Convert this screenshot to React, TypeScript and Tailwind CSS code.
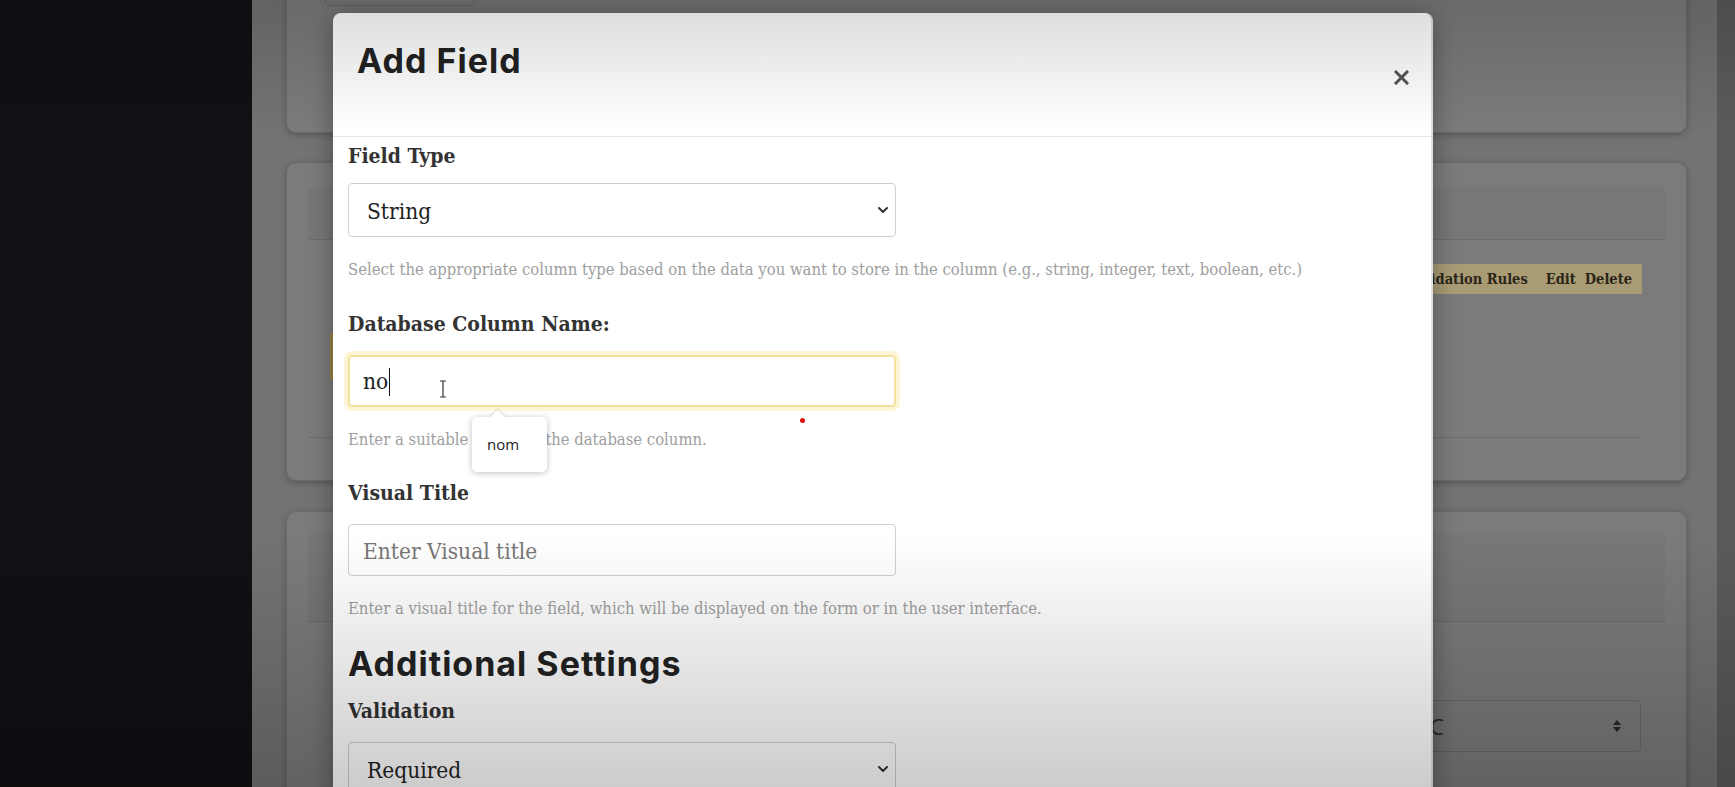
import { ChevronDown } from "lucide-react";

const slab = "font-['DejaVu_Serif_Condensed','DejaVu_Serif',serif] font-stretch-condensed";
const heading = "font-['Inter','Liberation_Sans',sans-serif] text-[34px] font-bold leading-[40px] tracking-[1px] text-[#222]";
const label = "font-['DejaVu_Serif_Condensed','DejaVu_Serif',serif] font-stretch-condensed text-[21px] font-bold leading-[34px] text-[#333]";
const help = "font-['DejaVu_Serif_Condensed','DejaVu_Serif',serif] font-stretch-condensed text-[16.5px] leading-[24px] text-[#9e9e9e]";

const UpDown = () => (
  <svg width="10" height="16" viewBox="0 0 10 16" fill="#262626">
    <path d="M1 7 L5 2 L9 7 Z" />
    <path d="M1 9 L5 14 L9 9 Z" />
  </svg>
);

const IBeam = () => (
  <svg width="8" height="18" viewBox="0 0 8 18" fill="none" stroke="#333" strokeWidth="1.2">
    <path d="M1 1 H7 M4 1 V17 M1 17 H7" />
  </svg>
);

const CloseIcon = () => (
  <svg width="15" height="15" viewBox="0 0 15 15" stroke="#555" strokeWidth="3" strokeLinecap="square">
    <path d="M2 2 L13 13 M13 2 L2 13" />
  </svg>
);

function BackgroundPage() {
  return (
    <div className="-mt-[40px] flex flex-col">
      {/* card 1 */}
      <section className="h-[173px] shrink-0 rounded-[10px] border border-[#6a6a6a] bg-[#7b7b7b] px-[21px] pt-[9px] shadow-[0_2px_6px_rgba(0,0,0,0.25)]">
        <div className="ml-[17px] h-[36px] w-[150px] rounded-[4px] border border-[#696969] bg-[#7a7a7a]" />
      </section>

      {/* card 2 */}
      <section className="mt-[29px] h-[319px] shrink-0 rounded-[10px] border border-[#6a6a6a] bg-[#7b7b7b] px-[21px] pt-[24px] shadow-[0_2px_6px_rgba(0,0,0,0.25)]">
        <div className="h-[53px] rounded-t-[4px] border-b border-[#6c6c6c] bg-[#777777]" />
        <div
          className={`mt-[24px] ml-[60px] mr-[23px] flex h-[30px] items-center justify-end bg-[#a99c75] pr-[10px] ${slab} text-[14.5px] font-bold text-[#2a2419]`}
        >
          <span>Validation Rules</span>
          <span className="ml-[18px]">Edit</span>
          <span className="ml-[9px]">Delete</span>
        </div>
        <div className="ml-[22px] mt-[39px] h-[47px] w-[40px] bg-[#9a8446]" />
        <div className="mr-[24px] mt-[57px] border-t border-[#6c6c6c]" />
      </section>

      {/* card 3 */}
      <section className="mt-[30px] h-[400px] shrink-0 rounded-[10px] border border-[#6a6a6a] bg-[#7b7b7b] px-[21px] pt-[21px] shadow-[0_2px_6px_rgba(0,0,0,0.25)]">
        <div className="h-[89px] rounded-t-[4px] border-b border-[#6c6c6c] bg-[#777777]" />
        <div className="mr-[24px] mt-[78px] flex justify-end">
          <div className="flex h-[52px] w-[251px] items-center justify-between rounded-[4px] border border-[#686868] pl-[13px] pr-[18px]">
            <span className="font-['Open_Sans',sans-serif] text-[22px] text-[#2a2a2a]">ASC</span>
            <UpDown />
          </div>
        </div>
      </section>
    </div>
  );
}

function AddFieldModal() {
  return (
    <div className="absolute left-[333px] top-[13px] flex h-[800px] w-[1100px] flex-col overflow-hidden rounded-t-[8px] border-r-2 border-[#e0e0e0] bg-white shadow-[0_4px_24px_rgba(0,0,0,0.35)]">
      <div className="flex h-[124px] shrink-0 items-start justify-between border-b border-[#e6e6e6] pl-[24px] pr-[22px]">
        <h2 className={`mt-[28px] ${heading}`}>Add Field</h2>
        <button className="mt-[57px]" aria-label="Close">
          <CloseIcon />
        </button>
      </div>

      <div className="flex-1 px-[15px] pt-[2px]">
        <div className={label}>Field Type</div>
        <div className="relative mt-[10px] w-[548px]">
          <select className={`h-[54px] w-full appearance-none rounded-[4px] border border-[#cfcfcf] bg-white pl-[18px] pt-[3px] ${slab} text-[22.5px] text-[#222]`}>
            <option>String</option>
          </select>
          <ChevronDown className="pointer-events-none absolute right-[5px] top-[19px] h-[16px] w-[16px] text-[#333]" strokeWidth={3} />
        </div>
        <p className={`mt-[21px] ${help}`}>
          Select the appropriate column type based on the data you want to store in the column (e.g., string, integer, text, boolean, etc.)
        </p>

        <div className={`mt-[25px] ${label}`}>Database Column Name:</div>
        <div className="relative mt-[14px] w-[548px]">
          <div className="flex h-[52px] items-center rounded-[4px] border-2 border-[#f3e1a0] pl-[13px] pt-[2px] shadow-[0_0_0_4px_rgba(250,225,130,0.35)]">
            <span className={`${slab} text-[22.5px] text-[#222]`}>no</span>
            <span className="ml-px h-[28px] border-l border-[#111]" />
          </div>
          <div className="pointer-events-none absolute left-[91px] top-[25px]">
            <IBeam />
          </div>
          <div className="absolute left-[124px] top-[62px] z-10 h-[55px] w-[75px] rounded-[5px] bg-white shadow-[0_1px_6px_rgba(0,0,0,0.25)]">
            <div className="absolute -top-[5px] left-[20px] h-[11px] w-[11px] rotate-45 bg-white shadow-[-1px_-1px_2px_rgba(0,0,0,0.12)]" />
            <div className="relative flex h-full items-center pl-[15px] font-['Open_Sans',sans-serif] text-[15px] text-[#222]">
              nom
            </div>
          </div>
        </div>
        <p className={`mt-[21px] ${help}`}>Enter a suitable name for the database column.</p>

        <div className={`mt-[24px] ${label}`}>Visual Title</div>
        <input
          className={`mt-[14px] h-[52px] w-[548px] rounded-[4px] border border-[#cfcfcf] pl-[14px] pt-[2px] ${slab} text-[22.5px] text-[#222] placeholder:text-[#777]`}
          placeholder="Enter Visual title"
        />
        <p className={`mt-[21px] ${help}`}>
          Enter a visual title for the field, which will be displayed on the form or in the user interface.
        </p>

        <h3 className={`mt-[23px] ${heading}`}>Additional Settings</h3>
        <div className={`mt-[10px] ${label}`}>Validation</div>
        <div className="relative mt-[14px] w-[548px]">
          <select className={`h-[54px] w-full appearance-none rounded-[4px] border border-[#cfcfcf] bg-white pl-[18px] pt-[3px] ${slab} text-[22.5px] text-[#222]`}>
            <option>Required</option>
          </select>
          <ChevronDown className="pointer-events-none absolute right-[5px] top-[19px] h-[16px] w-[16px] text-[#333]" strokeWidth={3} />
        </div>
      </div>
    </div>
  );
}

export default function App() {
  return (
    <div className="relative flex h-[787px] w-full overflow-hidden bg-[#737373]">
      <aside className="w-[252px] shrink-0 bg-[#0f1114]" />
      <main className="flex-1 pl-[34px] pr-[30px]">
        <BackgroundPage />
      </main>
      <div className="w-[18px] shrink-0 bg-[#5a5a5a]" />

      <AddFieldModal />

      {/* recording pointer */}
      <div className="absolute left-[800px] top-[418px] h-[5px] w-[5px] rounded-full bg-[#e01010]" />

      {/* video vignette */}
      <div className="pointer-events-none absolute inset-0 bg-[linear-gradient(to_bottom,rgba(0,0,0,0.14),rgba(0,0,0,0)_17%,rgba(0,0,0,0)_68%,rgba(0,0,0,0.2))]" />
    </div>
  );
}
